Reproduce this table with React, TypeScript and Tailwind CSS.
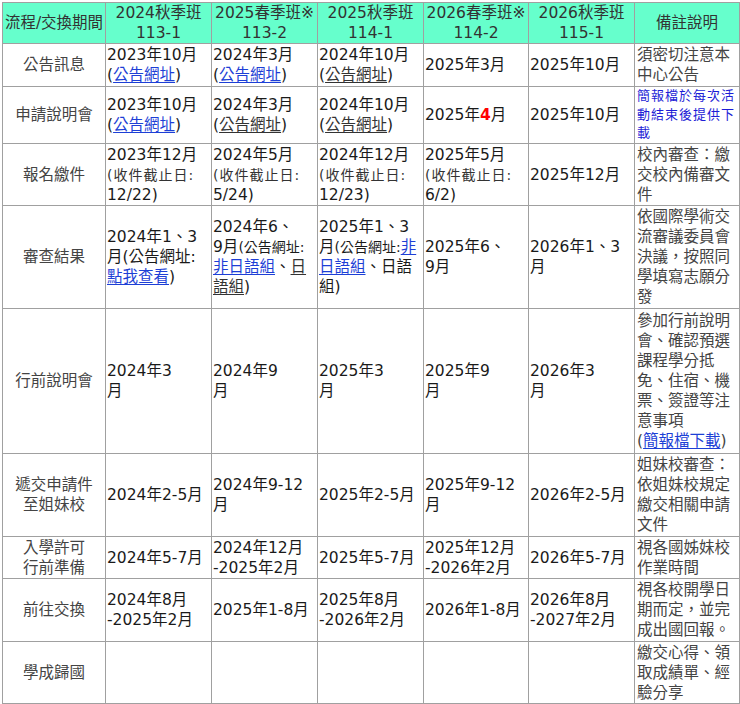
import React from 'react';

// 交換計畫時程表
const font = {
  fontFamily: '"DejaVu Sans", "Noto Sans CJK TC", sans-serif',
};

const A = ({ children }: { children: React.ReactNode }) => (
  <a className="text-[#1d3fd6] underline underline-offset-2">{children}</a>
);

// already-visited look: dark text, still underlined
const AV = ({ children }: { children: React.ReactNode }) => (
  <a className="text-[#333] underline underline-offset-2">{children}</a>
);

const Small = ({ children }: { children: React.ReactNode }) => (
  <span className="text-[14px] tracking-[1px] text-[#333]">{children}</span>
);

const headers = [
  ['2024秋季班', '113-1'],
  ['2025春季班※', '113-2'],
  ['2025秋季班', '114-1'],
  ['2026春季班※', '114-2'],
  ['2026秋季班', '115-1'],
];

type Row = {
  h: string;
  label: React.ReactNode;
  cells: React.ReactNode[];
  note: React.ReactNode;
};

const rows: Row[] = [
  {
    h: 'h-[43px]',
    label: '公告訊息',
    cells: [
      <>2023年10月<br />(<A>公告網址</A>)</>,
      <>2024年3月<br />(<A>公告網址</A>)</>,
      <>2024年10月<br />(<AV>公告網址</AV>)</>,
      '2025年3月',
      '2025年10月',
    ],
    note: <>須密切注意本<br />中心公告</>,
  },
  {
    h: 'h-[57px]',
    label: '申請說明會',
    cells: [
      <>2023年10月<br />(<A>公告網址</A>)</>,
      <>2024年3月<br />(<AV>公告網址</AV>)</>,
      <>2024年10月<br />(<AV>公告網址</AV>)</>,
      <>2025年<b className="text-[#ff0000]">4</b>月</>,
      '2025年10月',
    ],
    note: (
      <span className="block text-[13px] leading-[18.5px] tracking-[1px] text-[#1d1dd6]">
        簡報檔於每次活<br />動結束後提供下<br />載
      </span>
    ),
  },
  {
    h: 'h-[62px]',
    label: '報名繳件',
    cells: [
      <>2023年12月<br /><Small>(收件截止日:</Small><br />12/22)</>,
      <>2024年5月<br /><Small>(收件截止日:</Small><br />5/24)</>,
      <>2024年12月<br /><Small>(收件截止日:</Small><br />12/23)</>,
      <>2025年5月<br /><Small>(收件截止日:</Small><br />6/2)</>,
      '2025年12月',
    ],
    note: <>校內審查：繳<br />交校內備審文<br />件</>,
  },
  {
    h: 'h-[103px]',
    label: '審查結果',
    cells: [
      <>2024年1、3<br />月(公告網址:<br /><A>點我查看</A>)</>,
      <>2024年6、<br />9月<span className="text-[14px]">(公告網址:</span><br /><A>非日語組</A>、<AV>日</AV><br /><AV>語組</AV>)</>,
      <>2025年1、3<br />月<span className="text-[14px]">(公告網址:</span><A>非</A><br /><A>日語組</A>、日語<br />組)</>,
      <>2025年6、<br />9月</>,
      <>2026年1、3<br />月</>,
    ],
    note: <>依國際學術交<br />流審議委員會<br />決議，按照同<br />學填寫志願分<br />發</>,
  },
  {
    h: 'h-[145px]',
    label: '行前說明會',
    cells: [
      <>2024年3<br />月</>,
      <>2024年9<br />月</>,
      <>2025年3<br />月</>,
      <>2025年9<br />月</>,
      <>2026年3<br />月</>,
    ],
    note: (
      <>
        參加行前說明<br />會、確認預選<br />課程學分抵<br />免、住宿、機<br />票、簽證等注<br />意事項<br />(<A>簡報檔下載</A>)
      </>
    ),
  },
  {
    h: 'h-[83px]',
    label: <>遞交申請件<br />至姐妹校</>,
    cells: [
      '2024年2-5月',
      <>2024年9-12<br />月</>,
      '2025年2-5月',
      <>2025年9-12<br />月</>,
      '2026年2-5月',
    ],
    note: <>姐妹校審查：<br />依姐妹校規定<br />繳交相關申請<br />文件</>,
  },
  {
    h: 'h-[42px]',
    label: <>入學許可<br />行前準備</>,
    cells: [
      '2024年5-7月',
      <>2024年12月<br />-2025年2月</>,
      '2025年5-7月',
      <>2025年12月<br />-2026年2月</>,
      '2026年5-7月',
    ],
    note: <>視各國姊妹校<br />作業時間</>,
  },
  {
    h: 'h-[63px]',
    label: '前往交換',
    cells: [
      <>2024年8月<br />-2025年2月</>,
      '2025年1-8月',
      <>2025年8月<br />-2026年2月</>,
      '2026年1-8月',
      <>2026年8月<br />-2027年2月</>,
    ],
    note: <>視各校開學日<br />期而定，並完<br />成出國回報。</>,
  },
  {
    h: 'h-[62px]',
    label: '學成歸國',
    cells: ['', '', '', '', ''],
    note: <>繳交心得、領<br />取成績單、經<br />驗分享</>,
  },
];

export default function App() {
  return (
    <div className="bg-white w-[740px] h-[704px] overflow-hidden p-[2px]" style={font}>
      <table className="table-fixed border-collapse w-[737px] text-[15.5px] leading-[20px]">
        <colgroup>
          <col className="w-[103px]" />
          <col className="w-[106px]" />
          <col className="w-[106px]" />
          <col className="w-[106px]" />
          <col className="w-[105px]" />
          <col className="w-[106px]" />
          <col className="w-[105px]" />
        </colgroup>
        <thead>
          <tr className="h-[41px] bg-[#66ffcc] text-[#333]">
            <th className="border border-[#a0a0a0] font-normal p-0 whitespace-nowrap">流程/交換期間</th>
            {headers.map(([a, b]) => (
              <th key={a} className="border border-[#a0a0a0] font-normal p-0 whitespace-nowrap">
                {a}
                <br />
                {b}
              </th>
            ))}
            <th className="border border-[#a0a0a0] font-normal p-0">備註說明</th>
          </tr>
        </thead>
        <tbody>
          {rows.map((row, i) => (
            <tr key={i} className={row.h}>
              <td className="border border-[#a0a0a0] p-0 text-center text-[#444] align-middle">{row.label}</td>
              {row.cells.map((c, j) => (
                <td key={j} className="border border-[#a0a0a0] py-0 pl-[1px] pr-0 text-[#1a1a1a] align-middle whitespace-nowrap">
                  {c}
                </td>
              ))}
              <td className="border border-[#a0a0a0] py-0 pl-[2px] pr-0 text-[#444] align-middle whitespace-nowrap">
                {row.note}
              </td>
            </tr>
          ))}
        </tbody>
      </table>
    </div>
  );
}
